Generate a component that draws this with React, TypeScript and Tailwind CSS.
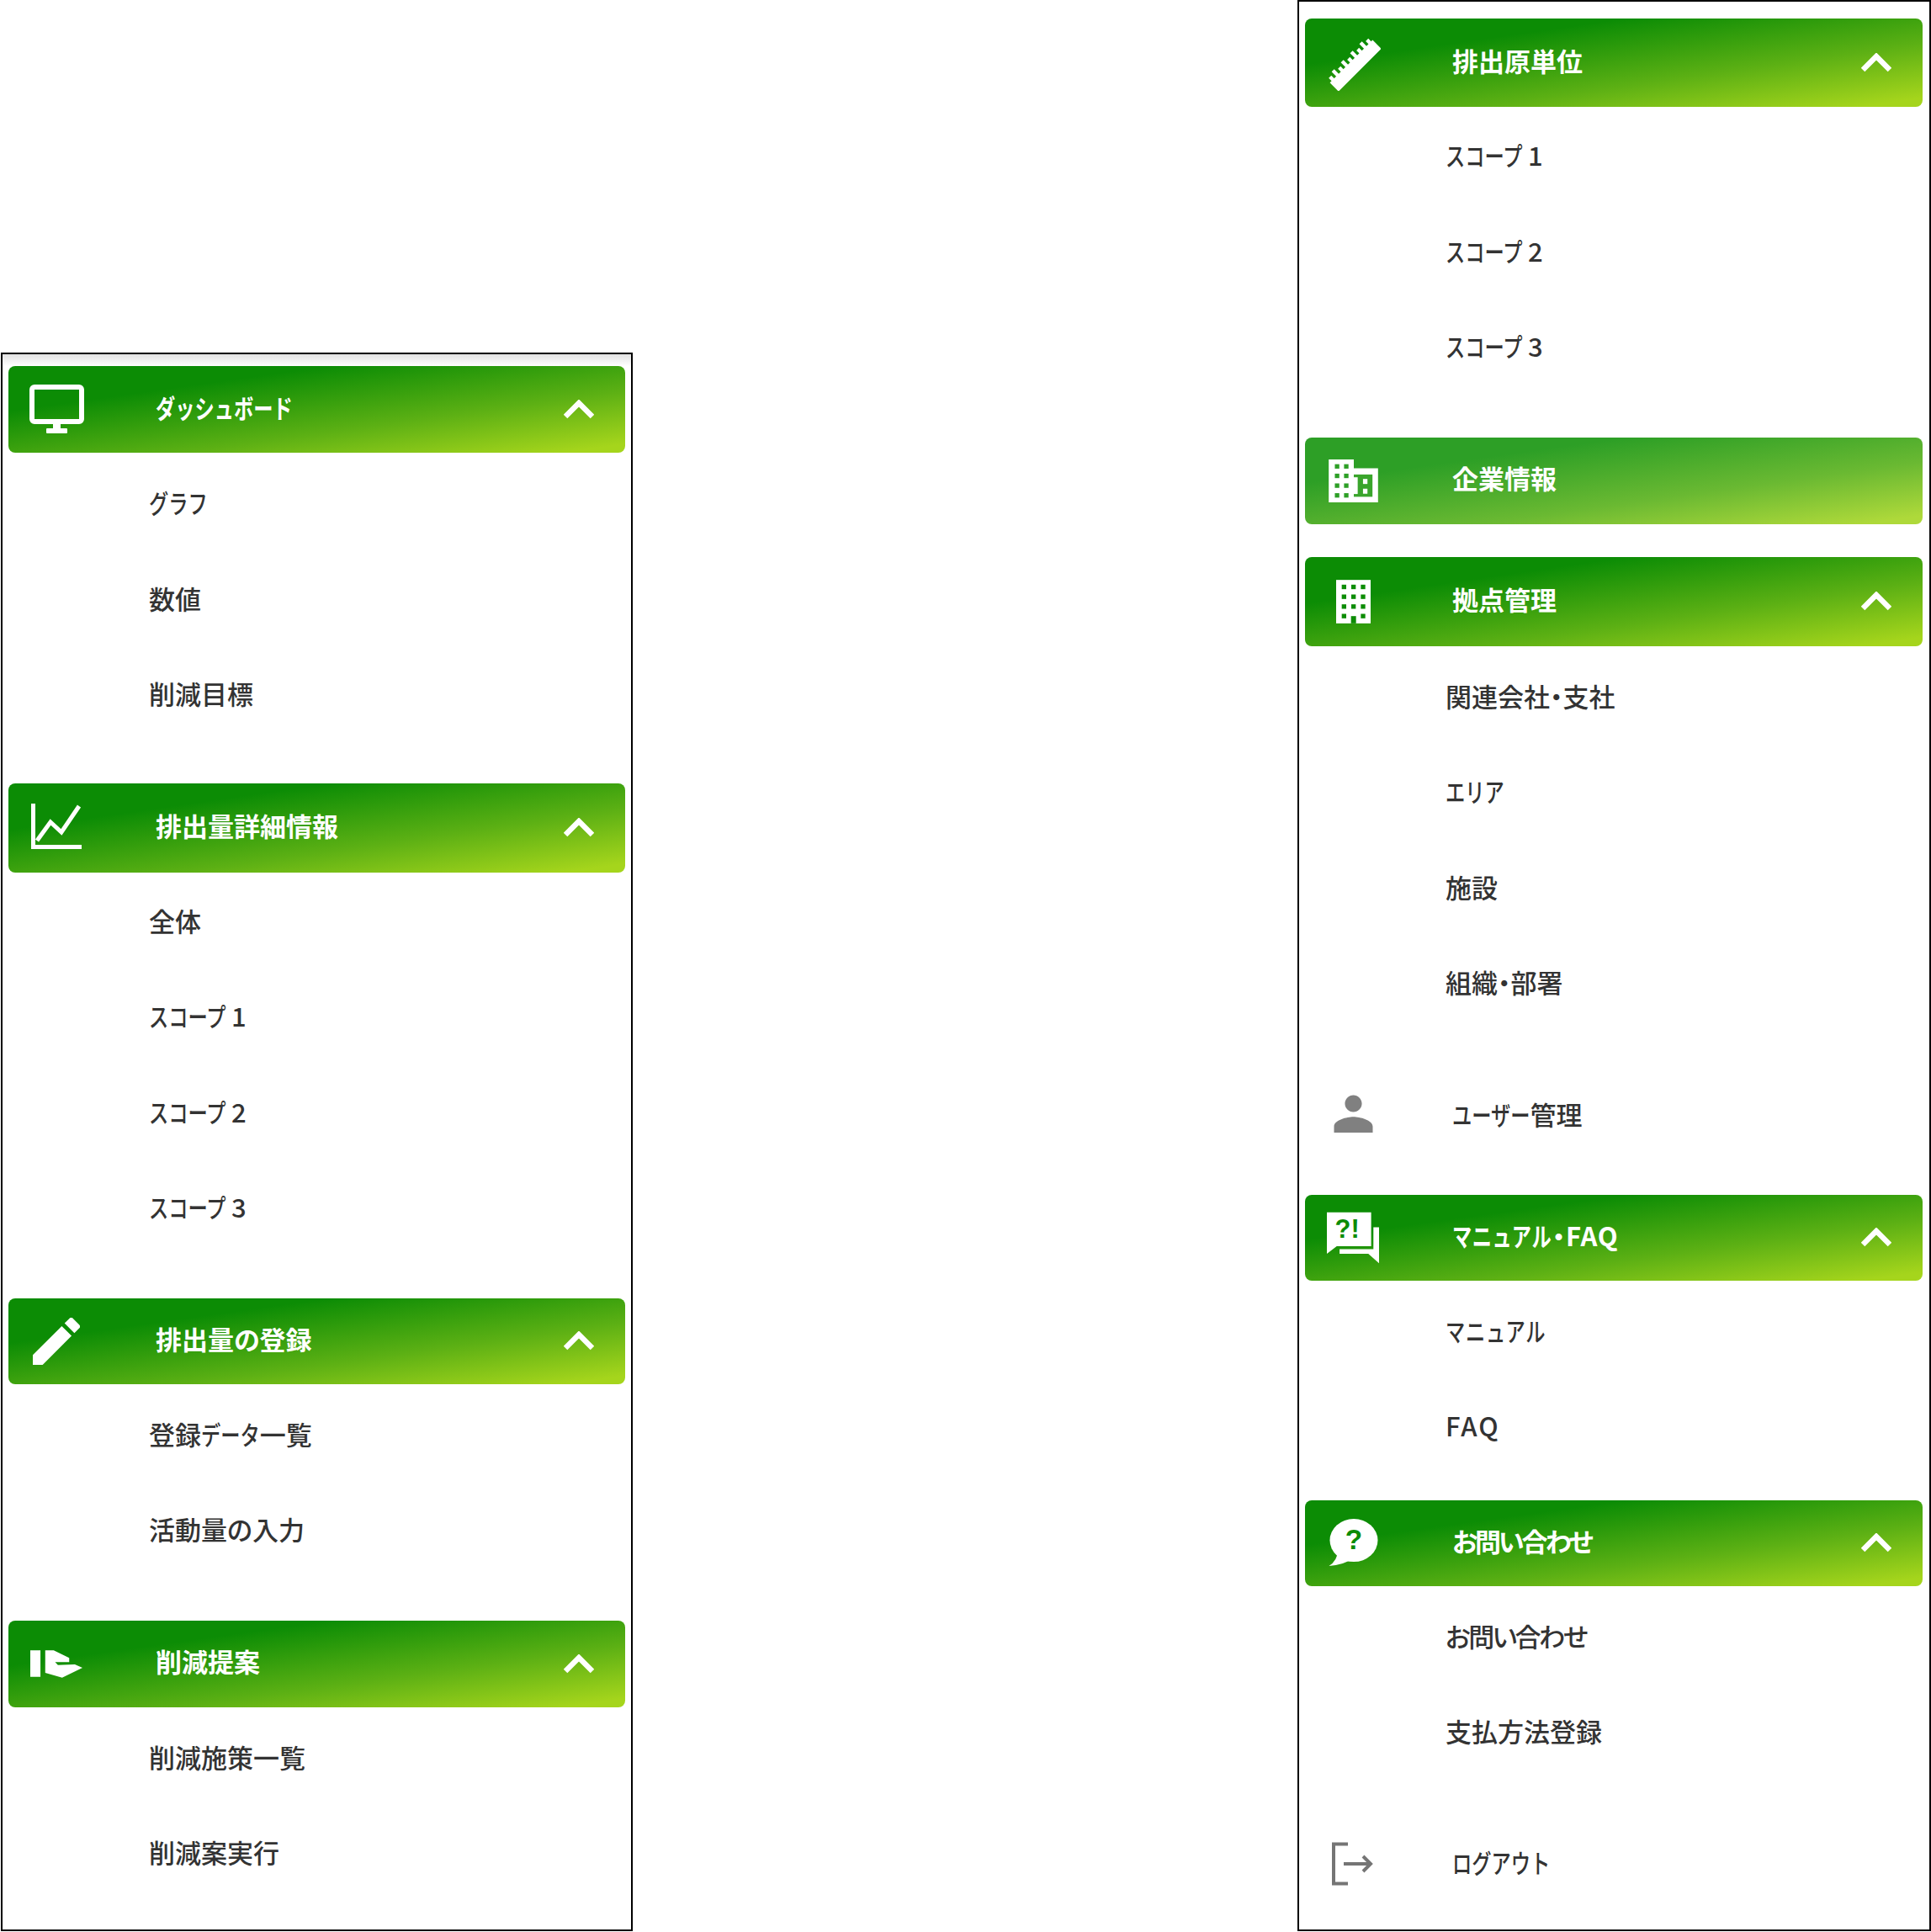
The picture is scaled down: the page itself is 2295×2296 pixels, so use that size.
import type { ReactNode } from 'react'

const green = '#0c8c05'
const fontPx = 31
const kanaScale = 0.75

const IconMonitor = () => (
  <svg viewBox="0 0 65 60" className="w-[65px] h-[60px]" fill="none">
    <rect x="3" y="3" width="59" height="41" rx="3" stroke="white" strokeWidth="6" />
    <rect x="28" y="46" width="9" height="8" fill="white" />
    <rect x="20" y="52" width="25" height="6" rx="1" fill="white" />
  </svg>
)

const IconChart = () => (
  <svg viewBox="0 0 60 54" className="w-[60px] h-[54px] mb-[4px]" fill="none" stroke="white" strokeWidth="5">
    <path d="M2.5 0V51.5H60" />
    <path d="M7 44L23 22L36 34L57 3" />
  </svg>
)

const IconPencil = () => (
  <svg viewBox="3 3 18 18" className="w-[56px] h-[56px]" fill="white">
    <path d="M3 17.25V21h3.75L17.81 9.94l-3.75-3.75L3 17.25zM20.71 7.04a1 1 0 0 0 0-1.41l-2.34-2.34a1 1 0 0 0-1.41 0l-1.83 1.83 3.75 3.75 1.83-1.83z" />
  </svg>
)

const IconHand = () => (
  <svg viewBox="112 118 185 97" className="w-[62px] h-[33px]" fill="white">
    <rect x="112" y="118" width="36" height="94" />
    <path d="M165 118H195L250 145V160H200L210 170L270 168L297 180L225 215L165 198Z" />
  </svg>
)

const IconRuler = () => (
  <svg viewBox="-34 -34 68 68" className="w-[66px] h-[66px]" fill="white">
    <g transform="rotate(-45)">
      <rect x="-37" y="-3" width="74" height="15" />
      {[-34, -26, -18, -10, -2, 6, 14, 22, 30].map((x, i) => (
        <rect key={x} x={x} y={i % 2 ? -11 : -8} width="4.5" height="9" />
      ))}
    </g>
  </svg>
)

const IconDomain = () => (
  <svg viewBox="115 68 177 154" className="w-[59px] h-[51px]" fill="white">
    <path d="M115 68H205V100H292V222H115Z" />
    {[93, 127, 162, 197].map((y) =>
      [145, 178].map((x) => <rect key={`${x}-${y}`} x={x - 8} y={y - 8} width="16" height="16" fill="#2d9f26" />),
    )}
    <rect x="205" y="122" width="67" height="80" fill="#3aa52c" />
    <rect x="205" y="132" width="14" height="60" fill="white" />
    <rect x="238" y="138" width="16" height="18" fill="white" />
    <rect x="238" y="173" width="16" height="18" fill="white" />
  </svg>
)

const IconBuilding = () => (
  <svg viewBox="142 503 123 155" className="w-[41px] h-[52px]" fill="white">
    <rect x="142" y="503" width="123" height="155" />
    {[528, 563, 598].map((y) =>
      [170, 204, 238].map((x) => <rect key={`${x}-${y}`} x={x - 8} y={y - 8} width="16" height="16" fill={green} />),
    )}
    <rect x="162" y="624" width="16" height="16" fill={green} />
    <rect x="230" y="624" width="16" height="16" fill={green} />
    <rect x="195" y="632" width="18" height="26" fill={green} />
  </svg>
)

const IconPerson = () => (
  <svg viewBox="4 4 16 16" className="w-[47px] h-[46px]" fill="#808080">
    <path d="M12 11.5c1.93 0 3.5-1.57 3.5-3.5S13.93 4.5 12 4.5 8.5 6.07 8.5 8s1.57 3.5 3.5 3.5zm0 2c-2.67 0-8 1.34-8 4V20h16v-2.5c0-2.66-5.33-4-8-4z" />
  </svg>
)

const IconChat = () => (
  <svg viewBox="115 65 185 180" className="w-[62px] h-[62px]" fill="white">
    <path d="M115 65H272V185H150L115 212Z" />
    <path d="M280 118H300V245L262 212H160V195H280Z" />
    <text x="143" y="155" fontSize="92" fontWeight="700" fontFamily="'Liberation Sans', sans-serif" fill={green}>
      ?
    </text>
    <text x="200" y="155" fontSize="92" fontWeight="700" fontFamily="'Liberation Sans', sans-serif" fill={green}>
      !
    </text>
  </svg>
)

const IconQuestion = () => (
  <svg viewBox="0 0 60 58" className="w-[60px] h-[57px]" fill="white">
    <ellipse cx="31" cy="26" rx="29" ry="26" />
    <path d="M12 38Q11 51 1 57Q18 56 32 47Z" />
    <text x="31" y="37" textAnchor="middle" fontSize="34" fontWeight="700" fontFamily="'Liberation Sans', sans-serif" fill={green}>
      ?
    </text>
  </svg>
)

const IconLogout = () => (
  <svg viewBox="0 0 52 52" className="w-[52px] h-[52px] mt-[5px]" fill="none" stroke="#757575" strokeWidth="4">
    <path d="M20 2.5H3V49.5H20" />
    <path d="M15 26H47M38 17L47 26L38 35" />
  </svg>
)

const Chevron = () => (
  <svg viewBox="0 0 36 23" className="w-[36px] h-[23px]" fill="none" stroke="white" strokeWidth="6.5">
    <path d="M2 20L18 4L34 20" />
  </svg>
)

// the reference font has narrow katakana, so squeeze those runs sideways
function Label({ text }: { text: string }) {
  const runs = text.split(/([ァ-ヶー]+)/).filter(Boolean)
  return (
    <>
      {runs.map((run, i) =>
        /^[ァ-ヶー]+$/.test(run) ? (
          <span
            key={i}
            className="inline-block origin-left scale-x-[0.75] [font-feature-settings:normal]"
            style={{ marginRight: -run.length * fontPx * (1 - kanaScale) }}
          >
            {run}
          </span>
        ) : (
          <span key={i} className="whitespace-pre">
            {run}
          </span>
        ),
      )}
    </>
  )
}

type BarProps = {
  icon: ReactNode
  label: string
  height: string
  faded?: boolean
  open?: boolean
  tracking?: string
}

function Bar({ icon, label, height, faded, open = true, tracking = '' }: BarProps) {
  return (
    <div
      className={`${height} ${
        faded
          ? 'from-[#2d9f26] via-[#6ab932] to-[#aed93a]'
          : 'from-[#0c8c05] via-[#5cb014] to-[#a5d51c]'
      } flex items-center pl-3 pr-[37px] rounded-lg bg-linear-to-br/srgb from-26% via-64% to-95% text-white`}
    >
      <span className="w-[90px] flex items-center justify-center shrink-0">{icon}</span>
      <span className={`ml-[73px] mb-[7px] flex-1 text-[31px] font-bold leading-none ${tracking}`}>
        <Label text={label} />
      </span>
      {open && <Chevron />}
    </div>
  )
}

function Item({ label, tracking = '' }: { label: string; tracking?: string }) {
  return (
    <li className={`h-[113.5px] flex items-center pl-[167px] text-[31px] font-medium leading-none text-[#333333] ${tracking}`}>
      <span>
        <Label text={label} />
      </span>
    </li>
  )
}

function Plain({ icon, label }: { icon: ReactNode; label: string }) {
  return (
    <div className="h-[103px] flex items-center pl-3 text-[#333333]">
      <span className="w-[90px] flex items-center justify-center shrink-0">{icon}</span>
      <span className="ml-[73px] text-[31px] font-medium leading-none">
        <Label text={label} />
      </span>
    </div>
  )
}

export default function App() {
  return (
    <div className="w-[2295px] h-[2296px] flex items-stretch bg-white font-['Noto_Sans_CJK_JP','Liberation_Sans',sans-serif] [font-feature-settings:'palt']">
      {/* left menu */}
      <aside className="w-[751px] ml-px mt-[419px] mb-px border-2 border-black">
        <div className="h-[14px] bg-linear-to-b from-[#e2e2e2] to-white" />
        <div className="px-[7px]">
          <section className="mb-[50px]">
            <Bar icon={<IconMonitor />} label="ダッシュボード" height="h-[103px]" />
            <ul className="pt-[2px]">
              <Item label="グラフ" />
              <Item label="数値" />
              <Item label="削減目標" />
            </ul>
          </section>
          <section className="mb-[52px]">
            <Bar icon={<IconChart />} label="排出量詳細情報" height="h-[106px]" />
            <ul>
              <Item label="全体" />
              <Item label="スコープ 1" />
              <Item label="スコープ 2" />
              <Item label="スコープ 3" />
            </ul>
          </section>
          <section className="mb-[52px]">
            <Bar icon={<IconPencil />} label="排出量の登録" height="h-[102px]" />
            <ul className="pt-[2px]">
              <Item label="登録データ一覧" />
              <Item label="活動量の入力" />
            </ul>
          </section>
          <section>
            <Bar icon={<IconHand />} label="削減提案" height="h-[103px]" />
            <ul className="pt-[2px]">
              <Item label="削減施策一覧" />
              <Item label="削減案実行" />
            </ul>
          </section>
        </div>
      </aside>

      {/* right menu */}
      <aside className="w-[753px] ml-auto mb-px border-2 border-black pt-[20px] pl-[7px] pr-[8px]">
        <section className="mb-[52px]">
          <Bar icon={<IconRuler />} label="排出原単位" height="h-[105px]" />
          <ul>
            <Item label="スコープ 1" />
            <Item label="スコープ 2" />
            <Item label="スコープ 3" />
          </ul>
        </section>
        <section className="mb-[39px]">
          <Bar icon={<IconDomain />} label="企業情報" height="h-[103px]" faded open={false} />
        </section>
        <section className="mb-[48px]">
          <Bar icon={<IconBuilding />} label="拠点管理" height="h-[106px]" />
          <ul className="pt-[2px]">
            <Item label="関連会社・支社" />
            <Item label="エリア" />
            <Item label="施設" />
            <Item label="組織・部署" />
          </ul>
        </section>
        <Plain icon={<IconPerson />} label="ユーザー管理" />
        <section className="mt-[45px] mb-[32px]">
          <Bar icon={<IconChat />} label="マニュアル・FAQ" height="h-[102px]" tracking="tracking-[0.7px]" />
          <ul className="pt-[2px]">
            <Item label="マニュアル" tracking="tracking-[1px]" />
            <Item label="FAQ" tracking="tracking-[2px]" />
          </ul>
        </section>
        <section className="mb-[47px]">
          <Bar icon={<IconQuestion />} label="お問い合わせ" height="h-[102px]" tracking="tracking-[-3px]" />
          <ul className="pt-[2px]">
            <Item label="お問い合わせ" tracking="tracking-[-2.5px]" />
            <Item label="支払方法登録" />
          </ul>
        </section>
        <Plain icon={<IconLogout />} label="ログアウト" />
      </aside>
    </div>
  )
}
